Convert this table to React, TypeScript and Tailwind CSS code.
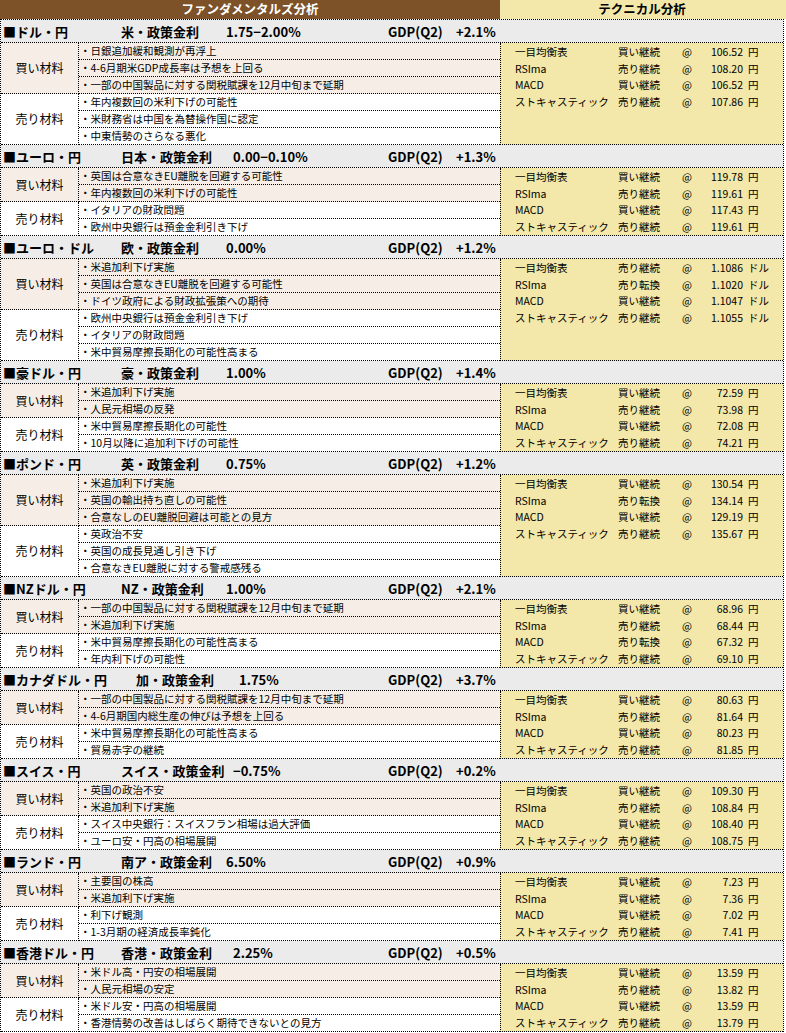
type Tech = [string, string, string, string];

type Section = {
  pair: string;
  policy: string;
  policyCls: string;
  rate: string;
  gdp: string;
  buy: string[];
  sell: string[];
  tech: Tech[];
};

const names = ["一目均衡表", "RSIma", "MACD", "ストキャスティック"];

function tech(signals: string[], values: string[], unit = "円"): Tech[] {
  return names.map((n, i) => [n, signals[i], values[i], unit]);
}

const sections: Section[] = [
  {
    pair: "■ドル・円",
    policy: "米・政策金利",
    policyCls: "w-[105px]",
    rate: "1.75−2.00%",
    gdp: "+2.1%",
    buy: [
      "・日銀追加緩和観測が再浮上",
      "・4-6月期米GDP成長率は予想を上回る",
      "・一部の中国製品に対する関税賦課を12月中旬まで延期",
    ],
    sell: [
      "・年内複数回の米利下げの可能性",
      "・米財務省は中国を為替操作国に認定",
      "・中東情勢のさらなる悪化",
    ],
    tech: tech(["買い継続", "売り継続", "買い継続", "売り継続"], ["106.52", "108.20", "106.52", "107.86"]),
  },
  {
    pair: "■ユーロ・円",
    policy: "日本・政策金利",
    policyCls: "w-[112px]",
    rate: "0.00−0.10%",
    gdp: "+1.3%",
    buy: ["・英国は合意なきEU離脱を回避する可能性", "・年内複数回の米利下げの可能性"],
    sell: ["・イタリアの財政問題", "・欧州中央銀行は預金金利引き下げ"],
    tech: tech(["買い継続", "売り継続", "買い継続", "売り継続"], ["119.78", "119.61", "117.43", "119.61"]),
  },
  {
    pair: "■ユーロ・ドル",
    policy: "欧・政策金利",
    policyCls: "w-[105px]",
    rate: "0.00%",
    gdp: "+1.2%",
    buy: [
      "・米追加利下げ実施",
      "・英国は合意なきEU離脱を回避する可能性",
      "・ドイツ政府による財政拡張策への期待",
    ],
    sell: [
      "・欧州中央銀行は預金金利引き下げ",
      "・イタリアの財政問題",
      "・米中貿易摩擦長期化の可能性高まる",
    ],
    tech: tech(["売り継続", "売り転換", "買い継続", "売り継続"], ["1.1086", "1.1020", "1.1047", "1.1055"], "ドル"),
  },
  {
    pair: "■豪ドル・円",
    policy: "豪・政策金利",
    policyCls: "w-[105px]",
    rate: "1.00%",
    gdp: "+1.4%",
    buy: ["・米追加利下げ実施", "・人民元相場の反発"],
    sell: ["・米中貿易摩擦長期化の可能性", "・10月以降に追加利下げの可能性"],
    tech: tech(["買い継続", "売り継続", "買い継続", "売り継続"], ["72.59", "73.98", "72.08", "74.21"]),
  },
  {
    pair: "■ポンド・円",
    policy: "英・政策金利",
    policyCls: "w-[105px]",
    rate: "0.75%",
    gdp: "+1.2%",
    buy: [
      "・米追加利下げ実施",
      "・英国の輸出持ち直しの可能性",
      "・合意なしのEU離脱回避は可能との見方",
    ],
    sell: ["・英政治不安", "・英国の成長見通し引き下げ", "・合意なきEU離脱に対する警戒感残る"],
    tech: tech(["買い継続", "売り転換", "買い継続", "売り継続"], ["130.54", "134.14", "129.19", "135.67"]),
  },
  {
    pair: "■NZドル・円",
    policy: "NZ・政策金利",
    policyCls: "w-[105px]",
    rate: "1.00%",
    gdp: "+2.1%",
    buy: ["・一部の中国製品に対する関税賦課を12月中旬まで延期", "・米追加利下げ実施"],
    sell: ["・米中貿易摩擦長期化の可能性高まる", "・年内利下げの可能性"],
    tech: tech(["買い継続", "売り継続", "売り転換", "売り継続"], ["68.96", "68.44", "67.32", "69.10"]),
  },
  {
    pair: "■カナダドル・円",
    policy: "加・政策金利",
    policyCls: "w-[118px] pl-[15px]",
    rate: "1.75%",
    gdp: "+3.7%",
    buy: [
      "・一部の中国製品に対する関税賦課を12月中旬まで延期",
      "・4-6月期国内総生産の伸びは予想を上回る",
    ],
    sell: ["・米中貿易摩擦長期化の可能性高まる", "・貿易赤字の継続"],
    tech: tech(["買い継続", "売り継続", "買い継続", "売り継続"], ["80.63", "81.64", "80.23", "81.85"]),
  },
  {
    pair: "■スイス・円",
    policy: "スイス・政策金利",
    policyCls: "w-[112px]",
    rate: "−0.75%",
    gdp: "+0.2%",
    buy: ["・英国の政治不安", "・米追加利下げ実施"],
    sell: ["・スイス中央銀行：スイスフラン相場は過大評価", "・ユーロ安・円高の相場展開"],
    tech: tech(["買い継続", "売り継続", "買い継続", "売り継続"], ["109.30", "108.84", "108.40", "108.75"]),
  },
  {
    pair: "■ランド・円",
    policy: "南ア・政策金利",
    policyCls: "w-[105px]",
    rate: "6.50%",
    gdp: "+0.9%",
    buy: ["・主要国の株高", "・米追加利下げ実施"],
    sell: ["・利下げ観測", "・1-3月期の経済成長率鈍化"],
    tech: tech(["買い継続", "買い継続", "買い継続", "売り継続"], ["7.23", "7.36", "7.02", "7.41"]),
  },
  {
    pair: "■香港ドル・円",
    policy: "香港・政策金利",
    policyCls: "w-[112px]",
    rate: "2.25%",
    gdp: "+0.5%",
    buy: ["・米ドル高・円安の相場展開", "・人民元相場の安定"],
    sell: ["・米ドル安・円高の相場展開", "・香港情勢の改善はしばらく期待できないとの見方"],
    tech: tech(["買い継続", "売り継続", "買い継続", "売り継続"], ["13.59", "13.82", "13.59", "13.79"]),
  },
];

function Group({ label, items, buy }: { label: string; items: string[]; buy: boolean }) {
  return (
    <div className={`flex ${buy ? "bg-[#f6eee6]" : "bg-white"}`}>
      <div className="flex w-[78px] shrink-0 items-center justify-center border-r border-b border-dotted border-black text-[12px]">
        {label}
      </div>
      <div className="flex-1">
        {items.map((item) => (
          <div
            key={item}
            className="flex h-[17px] items-center border-b border-dotted border-black pl-[1px] text-[10.5px] leading-none"
          >
            {item}
          </div>
        ))}
      </div>
    </div>
  );
}

function SectionBlock({ s }: { s: Section }) {
  return (
    <div>
      <div className="grid h-[23px] grid-cols-[120px_267px_68px_1fr] items-center border-b border-dotted border-black bg-[#ebebeb] text-[13px] font-bold leading-none">
        <div className="pl-[2px] whitespace-nowrap">{s.pair}</div>
        <div className="flex whitespace-nowrap">
          <span className={s.policyCls}>{s.policy}</span>
          <span>{s.rate}</span>
        </div>
        <div>GDP(Q2)</div>
        <div>{s.gdp}</div>
      </div>
      <div className="flex">
        <div className="w-[499px]">
          <Group label="買い材料" items={s.buy} buy />
          <Group label="売り材料" items={s.sell} buy={false} />
        </div>
        <div className="flex-1 border-l border-b border-dotted border-black bg-[#f3e8a9] pt-[1px]">
          {s.tech.map(([name, signal, value, unit]) => (
            <div key={name} className="flex h-[16.5px] items-center pl-[14px] text-[10.5px] leading-none">
              <span className="w-[103px] whitespace-nowrap">{name}</span>
              <span className="w-[64px]">{signal}</span>
              <span className="w-[14px]">@</span>
              <span className="w-[47px] text-right tabular-nums">{value}</span>
              <span className="pl-[5px]">{unit}</span>
            </div>
          ))}
        </div>
      </div>
    </div>
  );
}

export default function App() {
  return (
    <div className="w-[786px] bg-white font-['Noto_Sans_CJK_JP','Noto_Sans',sans-serif] text-black">
      <div className="flex h-[19px] text-[12.5px] font-bold leading-none">
        <div className="flex w-[500px] items-center justify-center bg-[#7d5229] text-white">
          ファンダメンタルズ分析
        </div>
        <div className="flex flex-1 items-center justify-center bg-[#f3e8a9] pr-[2px]">
          テクニカル分析
        </div>
      </div>
      <div className="w-[784px] border-x border-t border-dotted border-black">
        {sections.map((s) => (
          <SectionBlock key={s.pair} s={s} />
        ))}
      </div>
    </div>
  );
}
